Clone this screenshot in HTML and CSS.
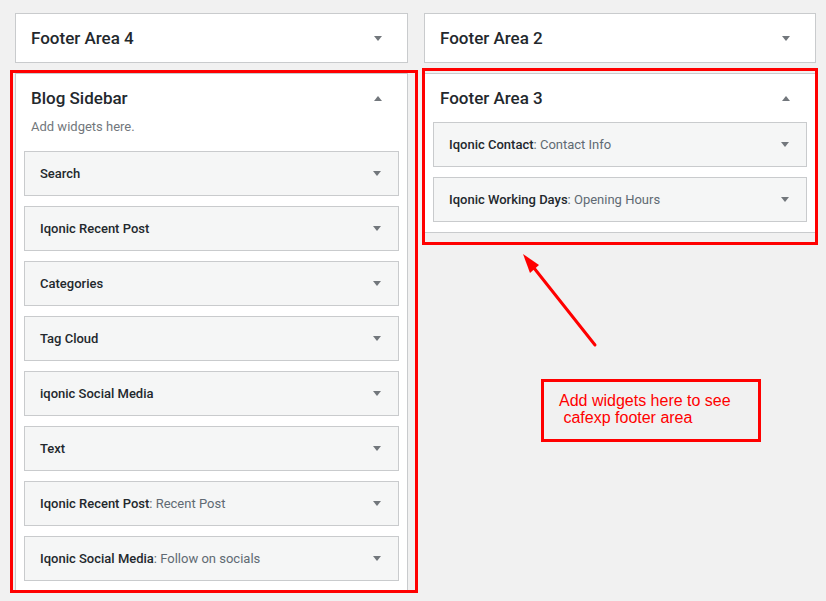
FILE: index.html
```html
<!DOCTYPE html>
<html lang="en">
<head>
<meta charset="utf-8">
<title>Widgets</title>
<link rel="stylesheet" href="styles.css">
</head>
<body>
<div class="page">
  <div class="col">
    <div class="sidebar">
      <div class="sb-head"><h2>Footer Area 4</h2><span class="tri down"></span></div>
    </div>
    <div class="sidebar open">
      <div class="sb-head"><h2>Blog Sidebar</h2><span class="tri up"></span></div>
      <p class="desc">Add widgets here.</p>
      <div class="widgets">
        <div class="widget"><span class="wt">Search</span><span class="tri down"></span></div>
        <div class="widget"><span class="wt">Iqonic Recent Post</span><span class="tri down"></span></div>
        <div class="widget"><span class="wt">Categories</span><span class="tri down"></span></div>
        <div class="widget"><span class="wt">Tag Cloud</span><span class="tri down"></span></div>
        <div class="widget"><span class="wt">iqonic Social Media</span><span class="tri down"></span></div>
        <div class="widget"><span class="wt">Text</span><span class="tri down"></span></div>
        <div class="widget"><span class="wt">Iqonic Recent Post<span class="sub">: Recent Post</span></span><span class="tri down"></span></div>
        <div class="widget"><span class="wt">Iqonic Social Media<span class="sub">: Follow on socials</span></span><span class="tri down"></span></div>
      </div>
    </div>
  </div>
  <div class="col">
    <div class="sidebar">
      <div class="sb-head"><h2>Footer Area 2</h2><span class="tri down"></span></div>
    </div>
    <div class="sidebar open">
      <div class="sb-head"><h2>Footer Area 3</h2><span class="tri up"></span></div>
      <div class="widgets">
        <div class="widget"><span class="wt">Iqonic Contact<span class="sub">: Contact Info</span></span><span class="tri down"></span></div>
        <div class="widget"><span class="wt">Iqonic Working Days<span class="sub">: Opening Hours</span></span><span class="tri down"></span></div>
      </div>
    </div>
  </div>
</div>

<div class="hl hl-blog"></div>
<div class="hl hl-footer3"></div>
<svg class="arrow" width="826" height="601" viewBox="0 0 826 601" aria-hidden="true">
  <line x1="595" y1="345" x2="534" y2="268" stroke="#ff0000" stroke-width="3" stroke-linecap="round"/>
  <polygon points="523,254 539,265 530,273" fill="#ff0000"/>
</svg>
<div class="callout">Add widgets here to see
 cafexp footer area</div>
</body>
</html>
```
FILE: styles.css
```css
html, body {
  margin: 0;
  padding: 0;
  background: #f1f1f1;
  font-family: Roboto, "Liberation Sans", Arial, sans-serif;
  color: #23282d;
  overflow: hidden;
}
.page {
  display: grid;
  grid-template-columns: 393px 392px;
  column-gap: 16px;
  padding: 13px 0 0 15px;
  align-items: start;
}
.col {
  display: flex;
  flex-direction: column;
  gap: 10px;
}
.sidebar {
  background: #fff;
  border: 1px solid #c9cbcd;
}
.sb-head {
  display: flex;
  align-items: center;
  justify-content: space-between;
  padding: 15px 25px 15px 15px;
}
.sb-head h2 {
  margin: 0;
  font-size: 17px;
  line-height: 18px;
  font-weight: 500;
  color: #23282d;
}
.desc {
  margin: -4px 0 0 15px;
  font-size: 13px;
  line-height: 18px;
  color: #72777c;
}
.open .desc { margin-bottom: 15px; }
.widgets {
  padding: 0 8px;
}
.widget {
  display: flex;
  align-items: center;
  justify-content: space-between;
  height: 43px;
  padding: 0 17px 0 15px;
  margin-bottom: 10px;
  background: #f5f6f6;
  border: 1px solid #c9cbcd;
}
.wt {
  font-size: 13px;
  font-weight: 500;
  color: #23282d;
}
.sub {
  font-weight: 400;
  color: #606a73;
}
.tri {
  width: 0;
  height: 0;
  border-left: 4px solid transparent;
  border-right: 4px solid transparent;
}
.tri.down { border-top: 5px solid #72777c; }
.tri.up { border-bottom: 5px solid #72777c; }

.hl {
  position: absolute;
  box-sizing: border-box;
  border: 3px solid #ff0000;
}
.hl-blog { left: 10px; top: 70px; width: 408px; height: 523px; }
.hl-footer3 { left: 422px; top: 68px; width: 396px; height: 177px; }
.arrow {
  position: absolute;
  left: 0;
  top: 0;
}
.callout {
  position: absolute;
  left: 541px;
  top: 379px;
  width: 220px;
  height: 63px;
  box-sizing: border-box;
  border: 3px solid #ff0000;
  padding: 10px 0 0 15px;
  font-family: "Liberation Sans", Arial, sans-serif;
  font-size: 16px;
  line-height: 17px;
  color: #ff0000;
  white-space: pre;
}
```
